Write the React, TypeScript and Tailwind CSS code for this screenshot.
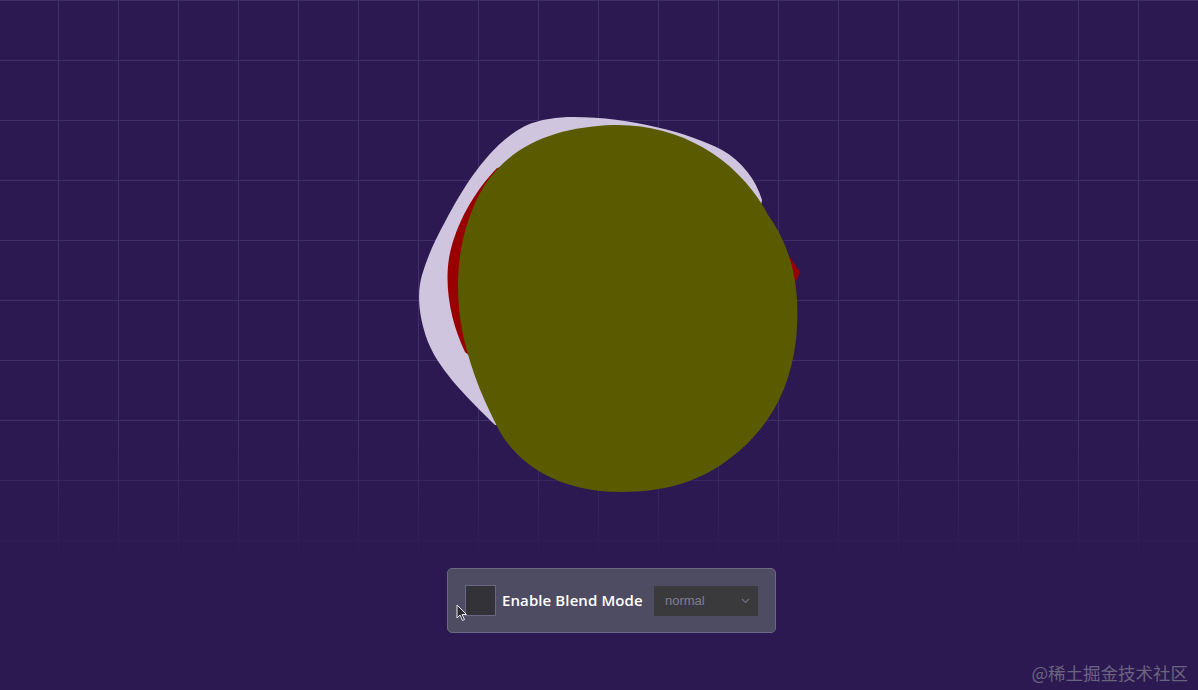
import React from "react";

function Blobs() {
  return (
    <svg width="400" height="400" viewBox="399 110 400 400" className="mt-[110px] block">
      {/* back blob */}
      <path
        d="M 573 117 C 630 117, 690 133, 722 150 C 742 161, 756 180, 762 200 L 720 420 L 495 425 C 470 400, 440 372, 428 342 C 418 315, 417 292, 422 275 C 428 255, 436 238, 446 220 C 462 190, 488 145, 525 126 C 540 119, 558 117, 573 117 Z"
        fill="#d0c5de"
      />
      {/* middle blob */}
      <path
        d="M 497 168 C 474 192, 455 225, 449 258 C 444 290, 452 325, 465 352 L 600 470 L 760 400 L 792 290 L 800 272 L 789 256 L 740 200 L 640 140 Z"
        fill="#990000"
      />
      {/* front blob */}
      <path
        d="M 613 125 C 680 123, 740 160, 768 215 C 797 255, 800 300, 796 340 C 789 400, 760 440, 716 468 C 680 490, 640 494, 600 491 C 556 486, 520 466, 500 432 C 486 405, 472 375, 463 335 C 453 285, 457 232, 484 186 C 513 142, 560 127, 613 125 Z"
        fill="#5a5a00"
      />
    </svg>
  );
}

function Pointer() {
  return (
    <svg width="12" height="18" viewBox="0 0 12 18" className="absolute left-[8px] top-[35px]">
      <path d="M1 1 L1 14 L4 11 L6.5 16.5 L8.5 15.5 L6 10.5 L10.5 10.5 Z" fill="#2a2a30" stroke="#e8e8ee" strokeWidth="1" />
    </svg>
  );
}

export default function App() {
  return (
    <div className="relative h-[690px] w-full overflow-hidden bg-[#2d1951] [background-image:linear-gradient(to_bottom,transparent_62%,#2d1951_82%),linear-gradient(to_right,#3f2e68_1px,transparent_1px),linear-gradient(to_bottom,#3f2e68_1px,transparent_1px)] [background-size:100%_100%,60px_60px,60px_60px] [background-position:0_0,58px_0,58px_0]">
      <div className="flex flex-col items-center">
        <Blobs />

        {/* Controls */}
        <div className="relative ml-[25px] mt-[58px] flex h-[65px] w-[329px] items-center rounded-[5px] border border-[#6c6a80] bg-[#4e4c62] pl-[17px] pr-[17px]">
          <div className="h-[31px] w-[31px] shrink-0 border border-[#6a6880] bg-[#333238]" />
          <span className="ml-[6px] font-['Open_Sans',sans-serif] text-[15px] font-semibold tracking-[0.1px] text-white">
            Enable Blend Mode
          </span>
          <div className="ml-auto flex h-[30px] w-[104px] items-center justify-between bg-[#3a3a3c] pl-[11px] pr-[8px]">
            <span className="font-['Liberation_Sans',sans-serif] text-[13px] text-[#817e91]">normal</span>
            <svg width="9" height="6" viewBox="0 0 9 6">
              <path d="M1 1 L4.5 4.5 L8 1" fill="none" stroke="#6f6d80" strokeWidth="1.2" />
            </svg>
          </div>
          <Pointer />
        </div>
      </div>

      <span className="absolute bottom-[9px] right-[10px] font-['Noto_Sans_CJK_SC',sans-serif] text-[17.5px] leading-none text-[#6b6480]">
        @稀土掘金技术社区
      </span>
    </div>
  );
}
